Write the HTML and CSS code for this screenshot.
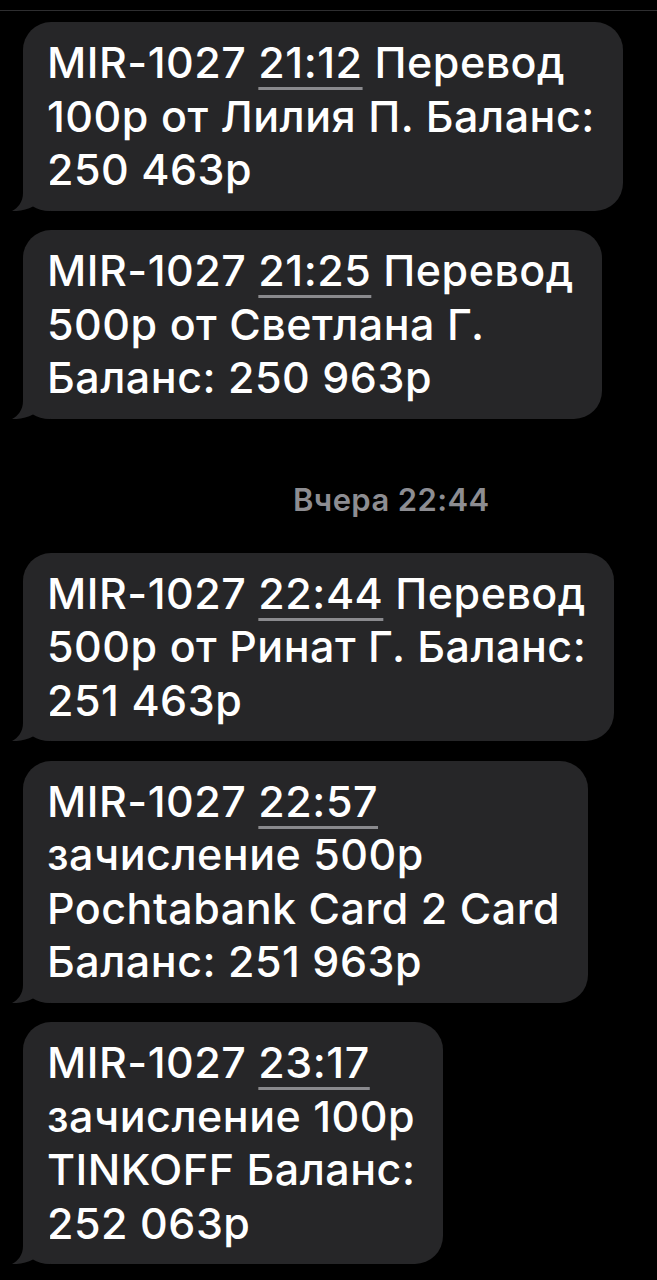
FILE: index.html
```html
<!DOCTYPE html>
<html lang="ru">
<head>
<meta charset="utf-8">
<title>Сообщения</title>
<link rel="stylesheet" href="styles.css">
</head>
<body>
<div class="screen">
  <div class="topline"></div>
  <div class="thread">
    <div class="bubble">
      <span class="line">MIR-1027 <span class="time">21:12</span> Перевод</span>
      <span class="line">100р от Лилия П. Баланс:</span>
      <span class="line">250 463р</span>
      <svg class="tail" viewBox="0 0 38 30" aria-hidden="true"><path d="M11 0 L11 12 C11 21 6 27 0 30 C7 30.5 15 28.5 21 25.5 C25 28 31 30 38 30 L38 0 Z"/></svg>
    </div>
    <div class="bubble">
      <span class="line">MIR-1027 <span class="time">21:25</span> Перевод</span>
      <span class="line">500р от Светлана Г.</span>
      <span class="line">Баланс: 250 963р</span>
      <svg class="tail" viewBox="0 0 38 30" aria-hidden="true"><path d="M11 0 L11 12 C11 21 6 27 0 30 C7 30.5 15 28.5 21 25.5 C25 28 31 30 38 30 L38 0 Z"/></svg>
    </div>
    <div class="stamp">Вчера 22:44</div>
    <div class="bubble">
      <span class="line">MIR-1027 <span class="time">22:44</span> Перевод</span>
      <span class="line">500р от Ринат Г. Баланс:</span>
      <span class="line">251 463р</span>
      <svg class="tail" viewBox="0 0 38 30" aria-hidden="true"><path d="M11 0 L11 12 C11 21 6 27 0 30 C7 30.5 15 28.5 21 25.5 C25 28 31 30 38 30 L38 0 Z"/></svg>
    </div>
    <div class="bubble">
      <span class="line">MIR-1027 <span class="time">22:57</span></span>
      <span class="line">зачисление 500р</span>
      <span class="line">Pochtabank Card 2 Card</span>
      <span class="line">Баланс: 251 963р</span>
      <svg class="tail" viewBox="0 0 38 30" aria-hidden="true"><path d="M11 0 L11 12 C11 21 6 27 0 30 C7 30.5 15 28.5 21 25.5 C25 28 31 30 38 30 L38 0 Z"/></svg>
    </div>
    <div class="bubble">
      <span class="line">MIR-1027 <span class="time">23:17</span></span>
      <span class="line">зачисление 100р</span>
      <span class="line">TINKOFF Баланс:</span>
      <span class="line">252 063р</span>
      <svg class="tail" viewBox="0 0 38 30" aria-hidden="true"><path d="M11 0 L11 12 C11 21 6 27 0 30 C7 30.5 15 28.5 21 25.5 C25 28 31 30 38 30 L38 0 Z"/></svg>
    </div>
  </div>
</div>
</body>
</html>
```

FILE: styles.css
```css
html, body {
  margin: 0;
  padding: 0;
  background: #000;
}

.screen {
  width: 657px;
  min-height: 1280px;
  background: #000;
  padding-top: 10px;
  box-sizing: border-box;
  font-family: Inter, "Noto Sans", "DejaVu Sans", sans-serif;
  color: #fff;
}

.topline {
  height: 1px;
  background: #2e2e30;
}

.thread {
  display: flex;
  flex-direction: column;
  align-items: flex-start;
  padding: 11px 0 0 23px;
  gap: 19.5px;
}

.bubble {
  position: relative;
  background: #262628;
  border-radius: 28px;
  padding: 14px 28px 14px 24px;
  display: flex;
  flex-direction: column;
  font-size: 43px;
  line-height: 53.5px;
  font-weight: 500;
  letter-spacing: 0.5px;
}

.line {
  white-space: nowrap;
}

.time {
  text-decoration: underline;
  text-decoration-color: #8a8a8e;
  text-decoration-thickness: 3px;
  text-underline-offset: 9px;
}

.tail {
  position: absolute;
  left: -11px;
  bottom: 0;
  width: 38px;
  height: 30px;
  fill: #262628;
}

.stamp {
  margin: 44px 0 15px 270px;
  font-size: 31px;
  line-height: 36px;
  font-weight: 600;
  letter-spacing: 0.4px;
  color: #8d8d92;
}
```
